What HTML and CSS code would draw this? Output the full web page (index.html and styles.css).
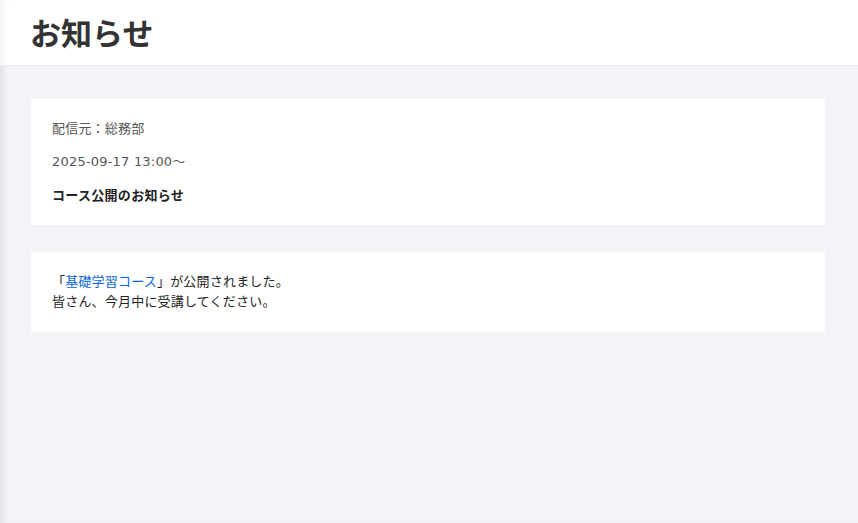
FILE: index.html
```html
<!DOCTYPE html>
<html lang="ja">
<head>
<meta charset="utf-8">
<title>お知らせ</title>
<link rel="stylesheet" href="styles.css">
</head>
<body>
<div class="page">
  <header class="header">
    <h1 class="title">お知らせ</h1>
  </header>
  <main class="main">
    <section class="card meta-card">
      <p class="meta">配信元：総務部</p>
      <p class="meta">2025-09-17 13:00～</p>
      <p class="subject">コース公開のお知らせ</p>
    </section>
    <section class="card body-card">
      <p class="body-text">「<a class="link" href="#">基礎学習コース</a>」が公開されました。<br>皆さん、今月中に受講してください。</p>
    </section>
  </main>
</div>
</body>
</html>
```
FILE: styles.css
```css
html, body {
  margin: 0;
  padding: 0;
  height: 100%;
}
body {
  font-family: "DejaVu Sans", "Noto Sans CJK JP", sans-serif;
  color: #333;
  background: #f4f4f8;
}
.page {
  min-height: 100%;
  box-shadow: inset 7px 0 6px -4px rgba(0, 0, 0, 0.08);
}
.header {
  background: #fff;
  height: 65px;
  border-bottom: 1px solid #ececf0;
  padding-left: 30px;
  box-shadow: inset 7px 0 6px -4px rgba(0, 0, 0, 0.06);
}
.title {
  margin: 0;
  font-family: "Noto Sans CJK JP", sans-serif;
  font-size: 31px;
  font-weight: 700;
  line-height: 65px;
  height: 65px;
  color: #333;
  position: relative;
  top: -1px;
}
.main {
  padding: 33px 33px 0 31px;
  display: flex;
  flex-direction: column;
  gap: 27px;
}
.card {
  background: #fff;
}
.meta-card {
  padding: 20px 21px 20px;
  display: flex;
  flex-direction: column;
  gap: 13px;
}
.meta-card p {
  margin: 0;
  font-size: 13px;
  line-height: 20px;
}
.meta {
  color: #555;
  letter-spacing: 0.2px;
}
.subject {
  font-family: "Noto Sans CJK JP", sans-serif;
  font-weight: 700;
  color: #222;
  letter-spacing: 0.3px;
}
.body-card {
  padding: 19px 21px 21px;
}
.body-text {
  margin: 0;
  font-family: "Noto Sans CJK JP", sans-serif;
  font-size: 13px;
  line-height: 20px;
  color: #222;
  letter-spacing: 0.2px;
}
.link {
  color: #0a66d8;
  text-decoration: none;
}
```
